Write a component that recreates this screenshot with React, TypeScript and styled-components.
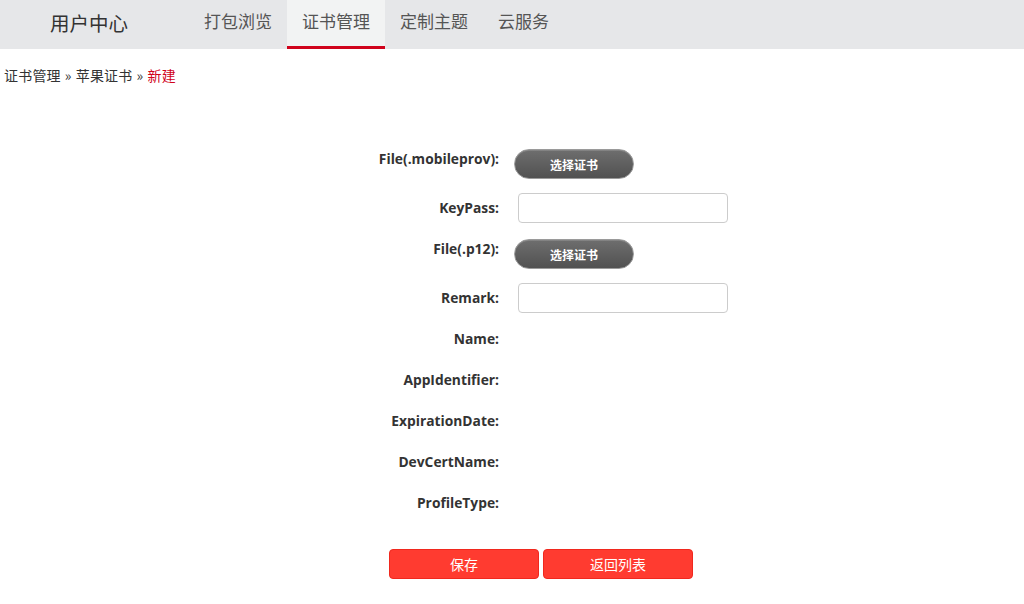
import styled, { createGlobalStyle } from "styled-components"

const GlobalStyle = createGlobalStyle`
  html, body {
    margin: 0;
    padding: 0;
    background: #ffffff;
  }
  body {
    font-family: "Open Sans", "Noto Sans CJK SC", sans-serif;
    color: #333333;
  }
`

const cjk = `"Microsoft YaHei", "Noto Sans CJK SC", sans-serif`

const NavBar = styled.div`
  display: flex;
  align-items: stretch;
  height: 49px;
  background: #e6e7e9;
`

const Brand = styled.div`
  width: 189px;
  padding-left: 50px;
  box-sizing: border-box;
  font-family: ${cjk};
  font-size: 19.5px;
  line-height: 45px;
  color: #333333;
`

const NavTab = styled.div<{ $active?: boolean }>`
  padding: 0 15px;
  font-family: ${cjk};
  font-size: 17px;
  line-height: 42px;
  color: #555555;
  background: ${(props) => (props.$active ? "#f2f3f3" : "transparent")};
  border-bottom: 3px solid ${(props) => (props.$active ? "#d0021b" : "transparent")};
  box-sizing: border-box;
  height: 49px;
`

const Breadcrumb = styled.div`
  padding: 15px 4px 0;
  font-family: ${cjk};
  font-size: 14px;
  letter-spacing: 0.2px;
  line-height: 22px;
  color: #333333;
`

const Sep = styled.span`
  margin: 0 4px;
`

const Current = styled.span`
  color: #d0021b;
`

const Form = styled.div`
  padding: 58px 0 0 299px;
  display: flex;
  flex-direction: column;
  gap: 11px;
`

const Row = styled.div`
  display: flex;
  align-items: flex-start;
  min-height: 30px;
`

const Label = styled.div`
  width: 200px;
  text-align: right;
  font-weight: 700;
  font-size: 13.8px;
  line-height: 30px;
  color: #333333;
`

const PickButton = styled.button`
  margin: 5px 0 3px 15px;
  width: 120px;
  height: 30px;
  border-radius: 15px;
  border: 1px solid #9a9a9a;
  background: linear-gradient(to bottom, #6e6e6e, #515151);
  box-shadow: inset 0 1px 0 rgba(255, 255, 255, 0.15);
  color: #ffffff;
  font-family: ${cjk};
  font-size: 12px;
  font-weight: 700;
  padding: 0;
  cursor: pointer;
`

const TextInput = styled.input`
  margin-left: 19px;
  width: 210px;
  height: 30px;
  box-sizing: border-box;
  border: 1px solid #cccccc;
  border-radius: 4px;
  padding: 0 8px;
  font-size: 13px;
  outline: none;
`

const Actions = styled.div`
  display: flex;
  gap: 4px;
  padding: 31px 0 0 389px;
`

const RedButton = styled.button`
  width: 150px;
  height: 30px;
  border: 1px solid #f0281e;
  border-radius: 4px;
  background: #ff3b30;
  color: #ffffff;
  font-family: ${cjk};
  font-size: 14px;
  padding: 0;
  cursor: pointer;
`

const fields = [
  { label: "File(.mobileprov):", kind: "file" },
  { label: "KeyPass:", kind: "input" },
  { label: "File(.p12):", kind: "file" },
  { label: "Remark:", kind: "input" },
  { label: "Name:", kind: "text" },
  { label: "AppIdentifier:", kind: "text" },
  { label: "ExpirationDate:", kind: "text" },
  { label: "DevCertName:", kind: "text" },
  { label: "ProfileType:", kind: "text" },
]

const tabs = ["打包浏览", "证书管理", "定制主题", "云服务"]

export default function App() {
  return (
    <>
      <GlobalStyle />
      <NavBar>
        <Brand>用户中心</Brand>
        {tabs.map((tab) => (
          <NavTab key={tab} $active={tab === "证书管理"}>
            {tab}
          </NavTab>
        ))}
      </NavBar>
      <Breadcrumb>
        证书管理<Sep>»</Sep>苹果证书<Sep>»</Sep>
        <Current>新建</Current>
      </Breadcrumb>
      <Form>
        {fields.map((field) => (
          <Row key={field.label}>
            <Label>{field.label}</Label>
            {field.kind === "file" && <PickButton>选择证书</PickButton>}
            {field.kind === "input" && <TextInput type="text" />}
          </Row>
        ))}
      </Form>
      <Actions>
        <RedButton>保存</RedButton>
        <RedButton>返回列表</RedButton>
      </Actions>
    </>
  )
}
